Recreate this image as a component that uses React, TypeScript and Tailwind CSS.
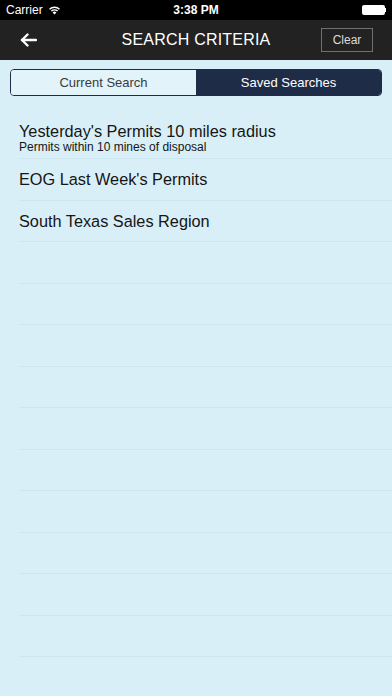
import React from "react";

const rows = [
  "EOG Last Week's Permits",
  "South Texas Sales Region",
  "",
  "",
  "",
  "",
  "",
  "",
  "",
  "",
  "",
  "",
];

function StatusBar() {
  return (
    <div className="h-5 bg-black text-white flex items-center justify-between px-[6px] text-[12px] relative">
      <div className="flex items-center gap-[5px]">
        <span>Carrier</span>
        <svg width="13" height="10" viewBox="0 0 13 10" fill="white">
          <path d="M6.5 9.5 L4.6 7.4 A2.8 2.8 0 0 1 8.4 7.4 Z" />
          <path d="M2.9 5.6 A5.2 5.2 0 0 1 10.1 5.6 L9.1 6.6 A3.8 3.8 0 0 0 3.9 6.6 Z" />
          <path d="M1 3.7 A7.9 7.9 0 0 1 12 3.7 L11 4.7 A6.5 6.5 0 0 0 2 4.7 Z" />
        </svg>
      </div>
      <span className="absolute left-1/2 -translate-x-1/2 font-semibold">3:38 PM</span>
      <div className="flex items-center">
        <div className="w-[23px] h-[10px] bg-white rounded-[2px]" />
        <div className="w-[1.5px] h-[4px] bg-white" />
      </div>
    </div>
  );
}

export default function App() {
  return (
    <div
      className="w-[392px] h-[696px] overflow-hidden bg-[#d9eff8] flex flex-col"
      style={{ fontFamily: '"Liberation Sans", Arial, sans-serif' }}
    >
      <StatusBar />
      <header className="h-10 bg-[#222222] flex items-center justify-between pl-[20px] pr-[19px] relative">
        <svg width="17" height="14" viewBox="0 0 17 14" fill="none" stroke="white" strokeWidth="2.4" strokeLinecap="round" strokeLinejoin="round">
          <path d="M16 7 H2" />
          <path d="M7.5 1.5 L2 7 L7.5 12.5" />
        </svg>
        <span className="absolute left-1/2 -translate-x-1/2 text-white text-[16px] tracking-[0.2px]">
          SEARCH CRITERIA
        </span>
        <button className="w-[52px] h-[24px] border border-[#6f6f6f] text-[#dcdcdc] text-[12px] flex items-center justify-center">
          Clear
        </button>
      </header>

      <div className="px-[10px] pt-[9px]">
        <div className="h-[27px] flex border border-[#1f2c47] rounded-[4px] overflow-hidden text-[13px]">
          <div className="flex-1 flex items-center justify-center text-[#3a3a3a] bg-[#e2f3fa]">
            Current Search
          </div>
          <div className="flex-1 flex items-center justify-center text-white bg-[#1f2c47]">
            Saved Searches
          </div>
        </div>
      </div>

      <div className="pl-[19px] mt-[14px]">
        <div className="h-[49px] border-b border-[#cce5f0] pt-[11px]">
          <div className="text-[16.3px] leading-[20px] text-[#151515]">
            Yesterday's Permits 10 miles radius
          </div>
          <div className="text-[12px] leading-[13px] text-[#151515]">
            Permits within 10 mines of disposal
          </div>
        </div>
        {rows.map((r, i) => (
          <div
            key={i}
            className="h-[41.5px] border-b border-[#cce5f0] flex items-center text-[16.3px] text-[#151515]"
          >
            {r}
          </div>
        ))}
      </div>
    </div>
  );
}
